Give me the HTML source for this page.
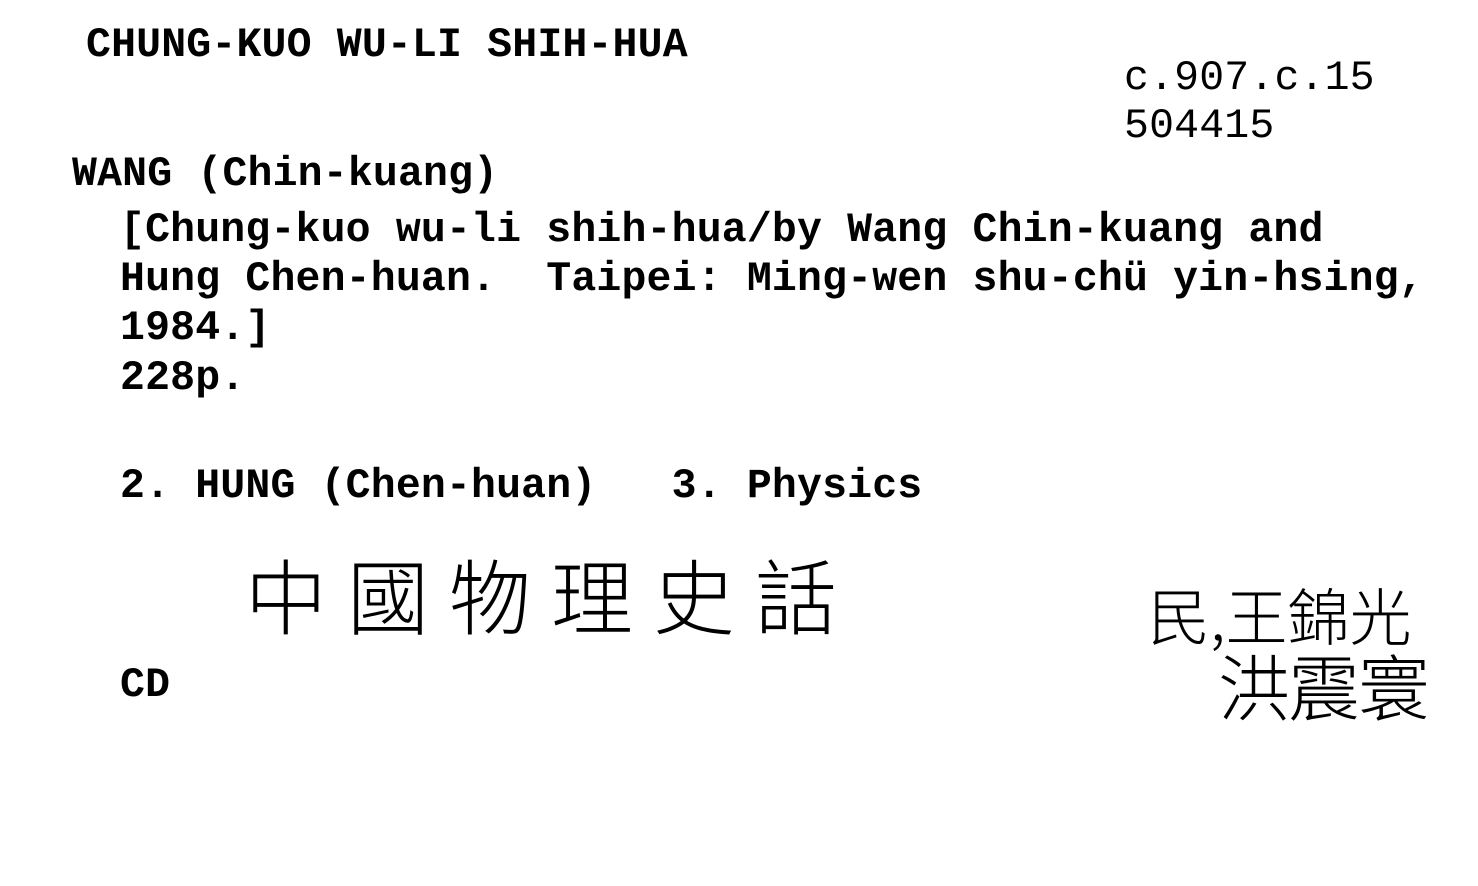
<!DOCTYPE html>
<html><head><meta charset="utf-8"><style>
html,body{margin:0;padding:0;background:#fff;}
body{width:1478px;height:886px;position:relative;overflow:hidden;}
.t{position:absolute;font-family:"Liberation Mono",monospace;font-weight:bold;font-size:41.5px;line-height:1;color:#000;white-space:pre;letter-spacing:0.17px;}
.c{position:absolute;font-family:"Noto Sans CJK TC","WenQuanYi Zen Hei",sans-serif;font-weight:300;color:#000;white-space:pre;line-height:1;}
</style></head><body>
<div class="t" style="left:86px;top:25px;">CHUNG-KUO WU-LI SHIH-HUA</div>
<div class="t" style="left:1124px;top:58px;font-weight:normal;">c.907.c.15</div>
<div class="t" style="left:1124px;top:106px;font-weight:normal;">504415</div>
<div class="t" style="left:72px;top:154px;">WANG (Chin-kuang)</div>
<div class="t" style="left:120px;top:210px;">[Chung-kuo wu-li shih-hua/by Wang Chin-kuang and</div>
<div class="t" style="left:120px;top:259px;">Hung Chen-huan.  Taipei: Ming-wen shu-chü yin-hsing,</div>
<div class="t" style="left:120px;top:308px;">1984.]</div>
<div class="t" style="left:120px;top:358px;">228p.</div>
<div class="t" style="left:120px;top:466px;">2. HUNG (Chen-huan)   3. Physics</div>
<div class="t" style="left:120px;top:665px;">CD</div>
<div class="c" style="left:245px;top:552px;font-size:82px;letter-spacing:20px;">中國物理史話</div>
<div class="c" style="left:1148px;top:582px;font-size:62px;">民,王錦光</div>
<div class="c" style="left:1218px;top:648px;font-size:72px;letter-spacing:-2px;">洪震寰</div>
</body></html>
